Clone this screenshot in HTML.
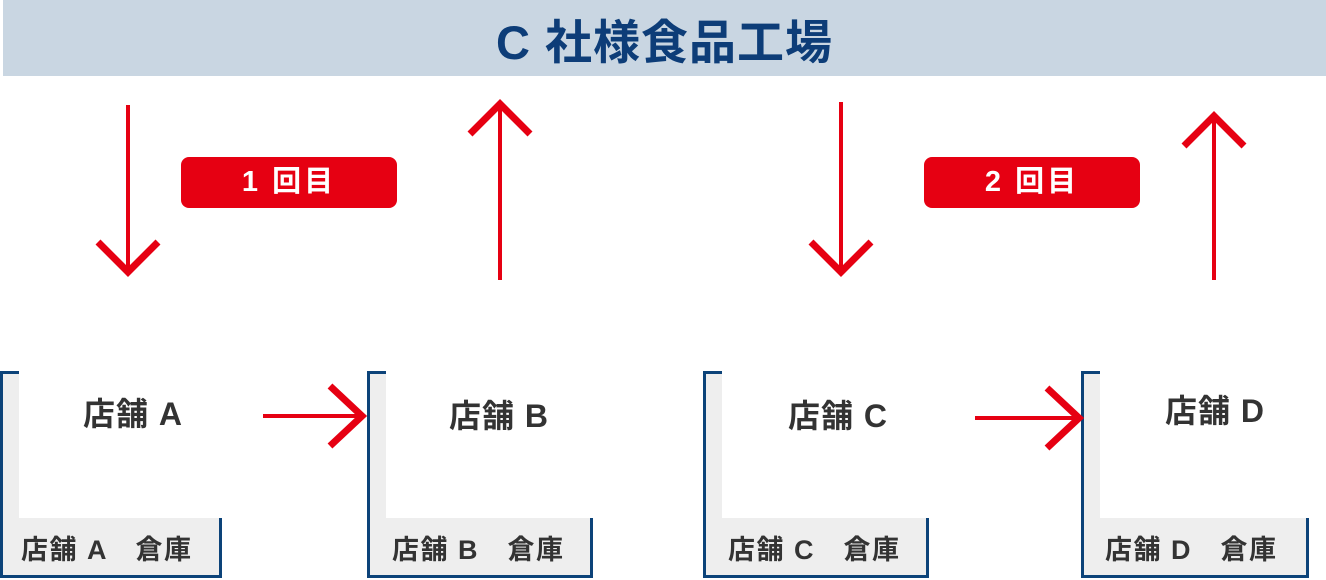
<!DOCTYPE html>
<html><head><meta charset="utf-8"><style>
body{margin:0;width:1326px;height:580px;background:#fff;position:relative;overflow:hidden;font-family:"Liberation Sans","Noto Sans CJK JP",sans-serif;}
.hdr{position:absolute;left:3px;top:0;width:1323px;height:76px;background:#c9d6e2;color:#0d3d78;font-weight:bold;font-size:47px;line-height:86px;text-align:center;letter-spacing:1px;overflow:hidden;}
.badge{position:absolute;top:157px;width:216px;height:51px;background:#e60012;border-radius:8px;color:#fff;font-weight:bold;font-size:29px;line-height:51px;text-align:center;letter-spacing:3px;}
.box{position:absolute;top:371px;height:207px;}
.box .l{position:absolute;left:0;top:0;width:3px;height:207px;background:#0c4379;}
.box .t{position:absolute;left:0;top:0;width:19px;height:3px;background:#0c4379;}
.box .g1{position:absolute;left:3px;top:3px;width:16px;height:147px;background:#eeeeee;}
.box .g2{position:absolute;left:3px;top:147px;height:57px;background:#eeeeee;}
.box .b{position:absolute;left:0;top:204px;height:3px;background:#0c4379;}
.box .r{position:absolute;top:147px;width:3px;height:60px;background:#0c4379;}
.box .n{position:absolute;top:18px;font-size:32px;font-weight:bold;color:#333;white-space:nowrap;letter-spacing:1px;}
.box .s{position:absolute;top:157px;font-size:27px;font-weight:bold;color:#333;white-space:nowrap;letter-spacing:1.5px;}
svg{position:absolute;left:0;top:0;}
</style></head><body>
<div class="hdr">C 社様食品工場</div>
<div class="badge" style="left:181px">1 回目</div>
<div class="badge" style="left:924px">2 回目</div>

<div class="box" style="left:0;width:222px"><div class="l"></div><div class="t"></div><div class="g1"></div><div class="g2" style="width:216px"></div><div class="b" style="width:222px"></div><div class="r" style="left:219px"></div><div class="n" style="left:83px">店舗 A</div><div class="s" style="left:21px">店舗 A　倉庫</div></div>
<div class="box" style="left:367px;width:226px"><div class="l"></div><div class="t"></div><div class="g1"></div><div class="g2" style="width:220px"></div><div class="b" style="width:226px"></div><div class="r" style="left:223px"></div><div class="n" style="left:82px;top:20px">店舗 B</div><div class="s" style="left:25px">店舗 B　倉庫</div></div>
<div class="box" style="left:703px;width:226px"><div class="l"></div><div class="t"></div><div class="g1"></div><div class="g2" style="width:220px"></div><div class="b" style="width:226px"></div><div class="r" style="left:223px"></div><div class="n" style="left:85px;top:20px">店舗 C</div><div class="s" style="left:25px">店舗 C　倉庫</div></div>
<div class="box" style="left:1081px;width:228px"><div class="l"></div><div class="t"></div><div class="g1"></div><div class="g2" style="width:222px"></div><div class="b" style="width:228px"></div><div class="r" style="left:225px"></div><div class="n" style="left:84px;top:15px">店舗 D</div><div class="s" style="left:24px">店舗 D　倉庫</div></div>

<svg width="1326" height="580" fill="none" stroke="#e60012">
<g stroke-width="4"><line x1="128" y1="105" x2="128" y2="272"/><line x1="500" y1="104" x2="500" y2="280"/><line x1="841" y1="102" x2="841" y2="272"/><line x1="1214" y1="116" x2="1214" y2="280"/><line x1="263" y1="416" x2="362" y2="416"/><line x1="975" y1="418" x2="1079" y2="418"/></g>
<g stroke-width="7" stroke-linejoin="miter">
<polyline points="98,242 128,272 158,242"/>
<polyline points="470,134 500,104 530,134"/>
<polyline points="811,242 841,272 871,242"/>
<polyline points="1184,146 1214,116 1244,146"/>
<polyline points="330,386 362,416 330,446"/>
<polyline points="1047,388 1079,418 1047,448"/>
</g></svg>
</body></html>
